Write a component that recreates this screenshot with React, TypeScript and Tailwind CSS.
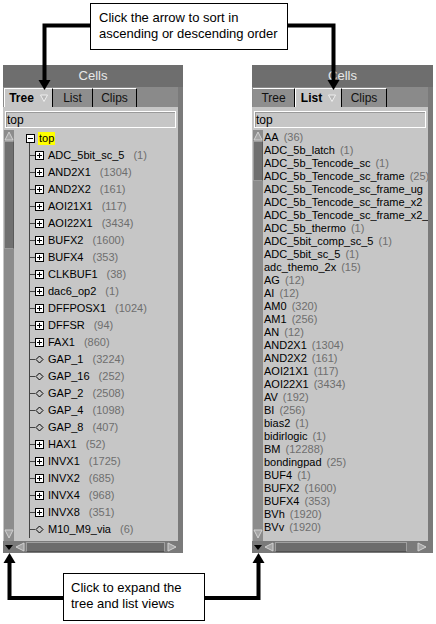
import React from 'react';

type Kind = 'box' | 'diamond';

const treeItems: [string, string, Kind][] = [
  ['ADC_5bit_sc_5', '1', 'box'],
  ['AND2X1', '1304', 'box'],
  ['AND2X2', '161', 'box'],
  ['AOI21X1', '117', 'box'],
  ['AOI22X1', '3434', 'box'],
  ['BUFX2', '1600', 'box'],
  ['BUFX4', '353', 'box'],
  ['CLKBUF1', '38', 'box'],
  ['dac6_op2', '1', 'box'],
  ['DFFPOSX1', '1024', 'box'],
  ['DFFSR', '94', 'box'],
  ['FAX1', '860', 'box'],
  ['GAP_1', '3224', 'diamond'],
  ['GAP_16', '252', 'diamond'],
  ['GAP_2', '2508', 'diamond'],
  ['GAP_4', '1098', 'diamond'],
  ['GAP_8', '407', 'diamond'],
  ['HAX1', '52', 'box'],
  ['INVX1', '1725', 'box'],
  ['INVX2', '685', 'box'],
  ['INVX4', '968', 'box'],
  ['INVX8', '351', 'box'],
  ['M10_M9_via', '6', 'diamond'],
];

const listItems: [string, string][] = [
  ['AA', '36'],
  ['ADC_5b_latch', '1'],
  ['ADC_5b_Tencode_sc', '1'],
  ['ADC_5b_Tencode_sc_frame', '25'],
  ['ADC_5b_Tencode_sc_frame_ug', '1'],
  ['ADC_5b_Tencode_sc_frame_x2', '1'],
  ['ADC_5b_Tencode_sc_frame_x2_ug', '1'],
  ['ADC_5b_thermo', '1'],
  ['ADC_5bit_comp_sc_5', '1'],
  ['ADC_5bit_sc_5', '1'],
  ['adc_themo_2x', '15'],
  ['AG', '12'],
  ['AI', '12'],
  ['AM0', '320'],
  ['AM1', '256'],
  ['AN', '12'],
  ['AND2X1', '1304'],
  ['AND2X2', '161'],
  ['AOI21X1', '117'],
  ['AOI22X1', '3434'],
  ['AV', '192'],
  ['BI', '256'],
  ['bias2', '1'],
  ['bidirlogic', '1'],
  ['BM', '12288'],
  ['bondingpad', '25'],
  ['BUF4', '1'],
  ['BUFX2', '1600'],
  ['BUFX4', '353'],
  ['BVh', '1920'],
  ['BVv', '1920'],
];

function PlusBox() {
  return (
    <svg width="9" height="9" viewBox="0 0 9 9" className="shrink-0">
      <rect x="0.5" y="0.5" width="8" height="8" fill="#fff" stroke="#000" />
      <path d="M2 4.5h5M4.5 2v5" stroke="#000" />
    </svg>
  );
}

function MinusBox() {
  return (
    <svg width="9" height="9" viewBox="0 0 9 9" className="shrink-0">
      <rect x="0.5" y="0.5" width="8" height="8" fill="#fff" stroke="#000" />
      <path d="M2 4.5h5" stroke="#000" />
    </svg>
  );
}

function Diamond() {
  return (
    <svg width="9" height="9" viewBox="0 0 9 9" className="shrink-0">
      <polygon points="4.5,1 8,4.5 4.5,8 1,4.5" fill="none" stroke="#000" />
    </svg>
  );
}

function SortArrow() {
  return (
    <svg width="8" height="8" viewBox="0 0 8 8" className="ml-[6px] shrink-0">
      <polygon points="0.5,1 7.5,1 4,7.5" fill="#b8b8b8" stroke="#eeeeee" />
    </svg>
  );
}

function ArrowBtn({ dir }: { dir: 'up' | 'down' | 'left' | 'right' }) {
  const pts = {
    up: '1,9 9,9 5,1',
    down: '1,1 9,1 5,9',
    left: '9,1 9,9 1,5',
    right: '1,1 1,9 9,5',
  }[dir];
  return (
    <svg width="10" height="10" viewBox="0 0 10 10" className="shrink-0">
      <polygon points={pts} fill="#a4a4a4" stroke="#d2d2d2" />
    </svg>
  );
}

function Tab({ label, active, w }: { label: string; active: boolean; w: string }) {
  return (
    <div
      className={`flex h-[19px] items-center justify-center border-r border-t border-r-black border-t-white text-[12px] ${w} ${
        active ? 'border-l border-l-white bg-[#c6c6c6] font-bold' : 'bg-[#8e8e8e] text-[#111]'
      }`}
    >
      <span>{label}</span>
      {active && <SortArrow />}
    </div>
  );
}

function Panel({
  active,
  tabW,
  thumbH,
  hThumb,
  width,
  children,
}: {
  active: string;
  tabW: string[];
  thumbH: string;
  hThumb: string;
  width: string;
  children: React.ReactNode;
}) {
  const tabs = ['Tree', 'List', 'Clips'];
  return (
    <div className={`flex h-[488px] flex-col ${width}`}>
      <div className="flex h-[22px] items-center justify-center bg-[#6e6e6e] text-[13px] text-[#e8e8e8]">
        Cells
      </div>
      <div className="flex flex-1 flex-col border-r-[5px] border-[#7a7a7a] bg-[#c6c6c6]">
        <div className="flex h-[20px] items-end bg-[#8a8a8a] pl-[1px]">
          {tabs.map((t, i) => (
            <Tab key={t} label={t} active={t === active} w={tabW[i]} />
          ))}
        </div>
        <div className="mx-[2px] mt-[4px] flex h-[17px] items-center border border-white bg-[#c6c6c6] pl-[1px] text-[12px] shadow-[inset_1px_1px_0_#9a9a9a]">
          top
        </div>
        <div className="mt-[2px] flex h-[411px]">
          <div className="ml-[1px] flex w-[10px] flex-col bg-[#8c8c8c]">
            <div className="flex h-[11px] items-end">
              <ArrowBtn dir="up" />
            </div>
            <div className={`${thumbH} border border-[#9c9c9c] border-r-[#5a5a5a] bg-[#707070]`} />
            <div className="flex-1" />
            <div className="flex h-[12px] items-start">
              <ArrowBtn dir="down" />
            </div>
          </div>
          <div className="flex-1 overflow-hidden bg-[#c6c6c6] text-[11px] whitespace-nowrap">{children}</div>
        </div>
        <div className="flex h-[12px] items-center bg-[#7a7a7a]">
          <div className="ml-[1px] flex h-[11px] w-[10px] items-center justify-center">
            <svg width="8" height="5" viewBox="0 0 8 5">
              <polygon points="0,0 8,0 4,5" fill="#000" />
            </svg>
          </div>
          <div className="flex w-[12px] justify-center">
            <ArrowBtn dir="left" />
          </div>
          <div className={`h-[10px] ${hThumb} border border-[#a0a0a0] border-b-[#505050] bg-[#6c6c6c]`} />
          <div className="flex-1" />
          <div className="flex w-[12px] justify-center">
            <ArrowBtn dir="right" />
          </div>
        </div>
      </div>
    </div>
  );
}

function TreeView() {
  return (
    <div className="flex flex-col">
      <div className="flex h-[17px] items-center">
        <div className="w-[12px]" />
        <div className="flex flex-col self-stretch">
          <div className="flex-1" />
          <MinusBox />
          <div className="ml-[3px] flex-1 border-l border-[#444]" />
        </div>
        <span className="ml-[3px] bg-[#ffff00] px-[1px] leading-[13px]">top</span>
      </div>
      {treeItems.map(([name, count, kind]) => (
        <div key={name} className="flex h-[17px] items-center">
          <div className="w-[15px]" />
          <div className="flex w-[6px] flex-col self-stretch">
            <div className="flex-1 border-b border-l border-[#444]" />
            <div className="flex-1 border-l border-[#444]" />
          </div>
          {kind === 'box' ? <PlusBox /> : <Diamond />}
          <span className="ml-[4px]">{name}</span>
          <span className="ml-[9px] text-[#6e6e6e]">({count})</span>
        </div>
      ))}
    </div>
  );
}

function ListView() {
  return (
    <div className="flex flex-col pl-[1px] pt-[1px]">
      {listItems.map(([name, count]) => (
        <div key={name} className="flex h-[13px] items-center">
          <span>{name}</span>
          <span className="ml-[5px] text-[#6e6e6e]">({count})</span>
        </div>
      ))}
    </div>
  );
}

export default function App() {
  return (
    <div className="relative h-[624px] w-[436px] overflow-hidden bg-white font-['Liberation_Sans',Arial,sans-serif] text-black">
      <div className="flex h-[65px] items-start pl-[90px] pt-[3px]">
        <div className="h-[47px] w-[198px] border border-black bg-white px-[8px] pt-[6px] text-[13px] leading-[16px] whitespace-nowrap">
          Click the arrow to sort in
          <br />
          ascending or descending order
        </div>
      </div>

      <div className="flex gap-[69px] pl-[3px]">
        <Panel active="Tree" tabW={['w-[49px]', 'w-[40px]', 'w-[44px]']} thumbH="h-[108px]" hThumb="w-[139px]" width="w-[180px]">
          <TreeView />
        </Panel>
        <Panel active="List" tabW={['w-[42px]', 'w-[47px]', 'w-[45px]']} thumbH="h-[40px]" hThumb="w-[132px]" width="w-[181px]">
          <ListView />
        </Panel>
      </div>

      <div className="pl-[63px] pt-[20px]">
        <div className="h-[48px] w-[142px] border border-black bg-white px-[7px] pt-[6px] text-[13px] leading-[16px] whitespace-nowrap">
          Click to expand the
          <br />
          tree and list views
        </div>
      </div>

      <svg className="pointer-events-none absolute inset-0" width="436" height="624" viewBox="0 0 436 624">
        <g stroke="#000" strokeWidth="4" fill="none">
          <path d="M90 25.5H44.5V82" />
          <path d="M288 25.5H333.5V82" />
          <path d="M63 598H9.5V561" />
          <path d="M205 598H258.5V561" />
        </g>
        <g fill="#000">
          <polygon points="38.5,80 50.5,80 44.5,90" />
          <polygon points="327.5,80 339.5,80 333.5,90" />
          <polygon points="3.5,563 15.5,563 9.5,553" />
          <polygon points="252.5,563 264.5,563 258.5,553" />
        </g>
      </svg>
    </div>
  );
}
